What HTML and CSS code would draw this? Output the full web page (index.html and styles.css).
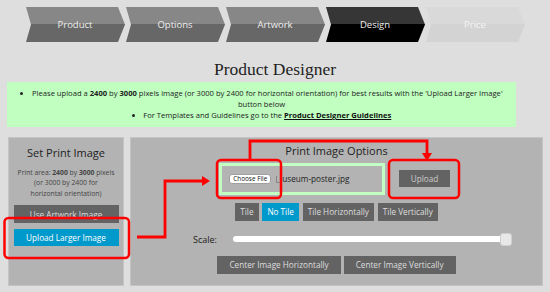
FILE: index.html
```html
<!DOCTYPE html>
<html lang="en">
<head>
  <meta charset="UTF-8" />
  <title>Product Designer</title>
  <link rel="stylesheet" href="styles.css">
</head>
<body>

  <div class="steps">
    <div class="step">Product</div>
    <div class="step">Options</div>
    <div class="step">Artwork</div>
    <div class="step current">Design</div>
    <div class="step next">Price</div>
  </div>

  <h1 class="page-title">Product Designer</h1>

  <div class="notice">
    <ul>
      <li>Please upload a <b>2400</b> by <b>3000</b> pixels image (or 3000 by 2400 for horizontal orientation) for best results with the 'Upload Larger Image' button below</li>
      <li>For Templates and Guidelines go to the <a href="#">Product Designer Guidelines</a></li>
    </ul>
  </div>

  <div class="panels">
    <div class="panel panel-left">
      <div class="panel-title">Set Print Image</div>
      <div class="print-area">Print area: <b>2400</b> by <b>3000</b> pixels<br>(or 3000 by 2400 for<br>horizontal orientation)</div>
      <button class="btn wide">Use Artwork Image</button>
      <button class="btn wide blue">Upload Larger Image</button>
    </div>

    <div class="panel panel-right">
      <div class="panel-title">Print Image Options</div>

      <div class="file-row">
        <div class="file-box">
          <span class="choose">Choose File</span>
          <span class="file-icon"></span>
          <span class="file-name">useum-poster.jpg</span>
        </div>
        <button class="btn upload">Upload</button>
      </div>

      <div class="btn-row">
        <button class="btn">Tile</button>
        <button class="btn blue">No Tile</button>
        <button class="btn">Tile Horizontally</button>
        <button class="btn">Tile Vertically</button>
      </div>

      <div class="scale-row">
        <span class="scale-label">Scale:</span>
        <div class="track"></div>
        <div class="thumb"></div>
      </div>

      <div class="btn-row center-row">
        <button class="btn">Center Image Horizontally</button>
        <button class="btn">Center Image Vertically</button>
      </div>
    </div>
  </div>

  <!-- red annotation marks over the screenshot -->
  <svg class="marks" width="550" height="292" viewBox="0 0 550 292">
    <g fill="none" stroke="#f00" stroke-width="2.5">
      <rect x="4.5" y="218" width="124.5" height="40" rx="4" />
      <rect x="217" y="160" width="64" height="38" rx="4" />
      <rect x="389" y="160" width="70" height="38" rx="4" />
      <path d="M137 237 H165 V181 H203" stroke-width="2.8" />
      <path d="M250 160 V141 H427 V154" stroke-width="2.8" />
    </g>
    <g fill="#f00">
      <polygon points="202,176 210,181 202,186" />
      <polygon points="422,153 432,153 427,161" />
    </g>
  </svg>

</body>
</html>
```

FILE: styles.css
```css
body {
  margin: 0;
  width: 550px;
  height: 292px;
  overflow: hidden;
  position: relative;
  background: #dedede;
  font-family: 'Open Sans', sans-serif;
  color: #222;
}

.steps {
  display: flex;
  padding: 7px 0 0 26px;
}

.step {
  width: 100px;
  height: 35px;
  clip-path: polygon(0 0, 92px 0, 99px 50%, 92px 100%, 0 100%, 5px 50%);
  background: linear-gradient(#878787 50%, #676767 50%);
  color: #eee;
  font-size: 9.5px;
  display: flex;
  align-items: center;
  justify-content: center;
  padding-right: 2px;
  box-sizing: border-box;
}

.step.current {
  background: linear-gradient(#363636 50%, #000 50%);
}

.step.next {
  background: linear-gradient(#d9d9d9 50%, #d3d3d3 50%);
  color: #f4f4f4;
}

.page-title {
  margin: 0;
  padding-top: 14px;
  line-height: 26px;
  font-family: 'Liberation Serif', serif;
  font-weight: normal;
  font-size: 17.5px;
  text-align: center;
  color: #1e1e1e;
}

.notice {
  margin-left: 7px;
  width: 509px;
  background: #c0ffc0;
  padding: 5.5px 0;
}

.notice ul {
  margin: 0;
  padding: 0 6px;
  list-style: disc inside;
  text-align: center;
  font-size: 7.6px;
  line-height: 11.3px;
}

.notice a {
  color: #111;
  font-weight: bold;
}

.panels {
  display: flex;
  gap: 6px;
  margin: 10px 0 0 8px;
}

.panel {
  background: #b3b3b3;
  border: 1px solid #c4c4c4;
  height: 149px;
  box-sizing: border-box;
  display: flex;
  flex-direction: column;
  align-items: center;
}

.panel-left {
  width: 116px;
  padding-top: 7px;
}

.panel-right {
  width: 413px;
  padding-top: 5px;
}

.panel-title {
  font-size: 11px;
  line-height: 16px;
}

.print-area {
  margin-top: 7px;
  font-size: 6.8px;
  line-height: 10.5px;
  text-align: center;
  color: #444;
}

.btn {
  border: none;
  margin: 0;
  background: #636363;
  color: #ddd;
  font-family: 'Open Sans', sans-serif;
  font-size: 8.2px;
  height: 18px;
  padding: 0 5.2px;
  display: flex;
  align-items: center;
  justify-content: center;
}

.btn.blue {
  background: #0099cc;
  color: #fff;
}

.btn.wide {
  width: 105px;
  margin-top: 6px;
}

.btn.wide.blue {
  height: 17px;
}

.file-row {
  display: flex;
  align-items: center;
  gap: 14px;
  margin-top: 4px;
  margin-right: 4px;
}

.file-box {
  width: 166px;
  height: 32px;
  box-sizing: border-box;
  border: 3px solid #c2ffc2;
  display: flex;
  align-items: center;
  padding-left: 7px;
}

.choose {
  background: #fff;
  border: 1px solid #a0a0a0;
  border-radius: 3px;
  font-size: 6.4px;
  line-height: 8px;
  padding: 0 3px;
  color: #111;
}

.file-icon {
  width: 3px;
  height: 6px;
  margin: 2px 2px 0 5px;
  border-left: 1px solid #888;
  border-bottom: 1px solid #888;
}

.file-name {
  font-size: 8.2px;
  color: #222;
}

.btn.upload {
  height: 17px;
  padding: 0 11.5px;
  color: #ccc;
}

.btn-row {
  display: flex;
  gap: 3.5px;
  margin-top: 8px;
}

.center-row {
  gap: 3px;
  margin-top: 10px;
}

.center-row .btn {
  padding: 0 12px;
}

.scale-row {
  display: flex;
  align-items: center;
  align-self: flex-start;
  margin: 12px 0 0 62px;
  height: 13px;
}

.scale-label {
  width: 40px;
  font-size: 9px;
}

.track {
  width: 272px;
  height: 6px;
  background: #fff;
  border-radius: 3px;
}

.thumb {
  width: 12px;
  height: 13px;
  margin-left: -5px;
  box-sizing: border-box;
  background: #e8e8e8;
  border: 1px solid #cfcfcf;
  border-radius: 3px;
}

.marks {
  position: absolute;
  top: 0;
  left: 0;
  pointer-events: none;
}
```
